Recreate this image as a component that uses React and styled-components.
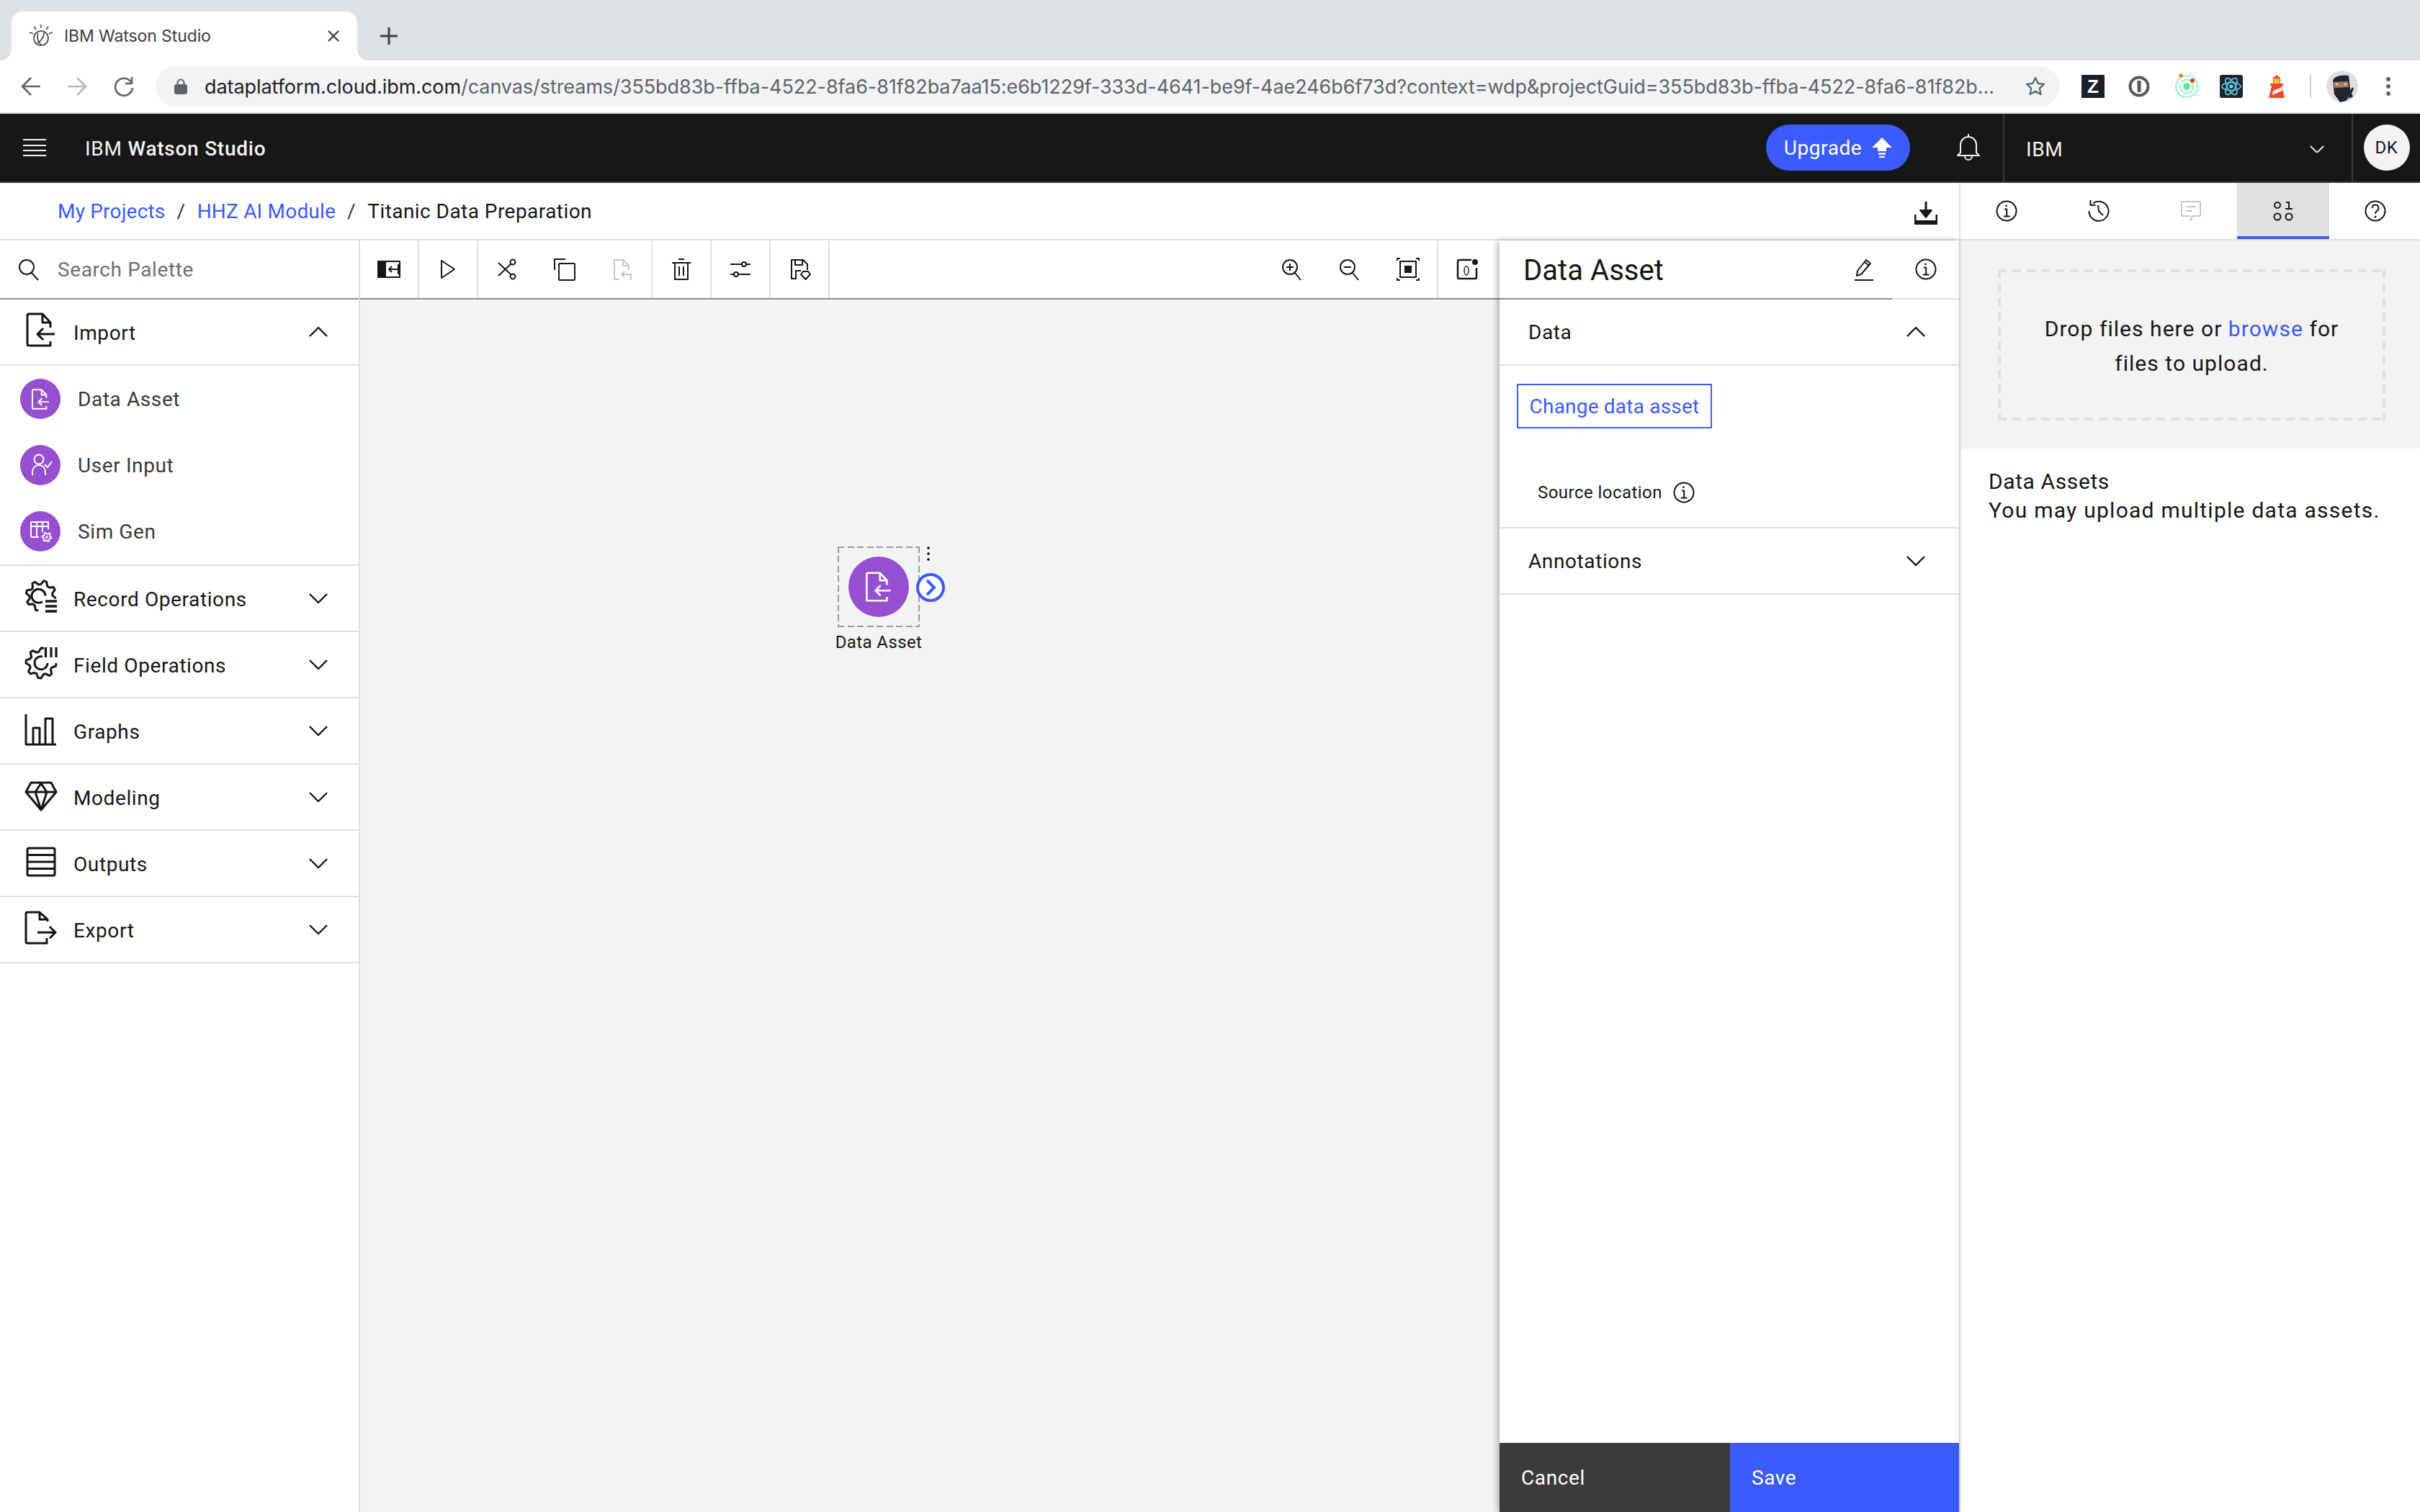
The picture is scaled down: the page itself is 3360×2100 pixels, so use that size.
import React from "react";
import styled, { createGlobalStyle, css } from "styled-components";

const BLUE = "#3a5bff";
const INK = "#161616";
const RULE = "#e0e0e0";
const PURPLE = "#964fd1";
const PLEX = `"Roboto", "Liberation Sans", sans-serif`;

const GlobalStyle = createGlobalStyle`
  html, body { margin: 0; padding: 0; background: #fff; }
  * { box-sizing: border-box; }
`;

// the browser's own dashed border is too short here, so the dashes are painted
const dashed = (color, w, on, off) => css`
  background-image:
    repeating-linear-gradient(90deg, ${color} 0 ${on}px, transparent ${on}px ${on + off}px),
    repeating-linear-gradient(90deg, ${color} 0 ${on}px, transparent ${on}px ${on + off}px),
    repeating-linear-gradient(180deg, ${color} 0 ${on}px, transparent ${on}px ${on + off}px),
    repeating-linear-gradient(180deg, ${color} 0 ${on}px, transparent ${on}px ${on + off}px);
  background-size: 100% ${w}px, 100% ${w}px, ${w}px 100%, ${w}px 100%;
  background-position: 0 0, 0 100%, 0 0, 100% 0;
  background-repeat: no-repeat;
`;

const Page = styled.div`
  width: 3360px;
  height: 2100px;
  display: flex;
  flex-direction: column;
  overflow: hidden;
  font-family: ${PLEX};
  font-size: 28px;
  letter-spacing: 0.6px;
  color: ${INK};
`;

/* browser chrome */
const TabStrip = styled.div`
  height: 84px;
  flex: none;
  display: flex;
  align-items: flex-end;
  padding-left: 16px;
  background: #dee1e6;
`;

const Tab = styled.div`
  position: relative;
  width: 480px;
  height: 68px;
  display: flex;
  align-items: center;
  padding: 0 24px;
  background: #fff;
  border-radius: 16px 16px 0 0;
  font-family: "Inter", "Liberation Sans", sans-serif;
  font-size: 23px;
  letter-spacing: -0.1px;
  color: #3c4043;

  &::before,
  &::after {
    content: "";
    position: absolute;
    bottom: 0;
    width: 16px;
    height: 16px;
  }
  &::before {
    left: -16px;
    background: radial-gradient(circle at 0 0, transparent 16px, #fff 16.5px);
  }
  &::after {
    right: -16px;
    background: radial-gradient(circle at 100% 0, transparent 16px, #fff 16.5px);
  }
`;

const TabTitle = styled.span`
  flex: 1;
  margin-left: 15px;
`;

const NewTab = styled.div`
  width: 88px;
  height: 68px;
  display: flex;
  align-items: center;
  justify-content: center;
  color: #3c4043;
`;

const AddressBar = styled.div`
  height: 74px;
  flex: none;
  display: flex;
  align-items: flex-start;
  padding-top: 8px;
  background: #fff;
  border-bottom: 2px solid #dee1e6;
`;

const NavButton = styled.div`
  width: ${(p) => p.$w}px;
  height: 56px;
  flex: none;
  display: flex;
  align-items: center;
  justify-content: center;
  color: ${(p) => (p.$off ? "#b4b6ba" : "#5f6368")};
`;

const Omnibox = styled.div`
  width: 2644px;
  height: 56px;
  flex: none;
  display: flex;
  align-items: center;
  padding: 0 20px 0 26px;
  border-radius: 28px;
  background: #f1f3f4;
  color: #5f6368;
`;

const Url = styled.div`
  flex: 1;
  margin: 0 20px 0 24px;
  white-space: nowrap;
  overflow: hidden;
  font-family: "Inter", "Liberation Sans", sans-serif;
  font-size: 27px;
  letter-spacing: -0.07px;

  b {
    font-weight: 400;
    color: #202124;
  }
`;

const Extensions = styled.div`
  flex: 1;
  height: 56px;
  display: flex;
  align-items: center;
  padding-left: 30px;
`;

const ExtSlot = styled.div`
  width: ${(p) => p.$w || 64}px;
  height: 44px;
  flex: none;
  display: flex;
  align-items: center;
  justify-content: ${(p) => p.$align || "flex-start"};
`;

const ZLogo = styled.span`
  width: 32px;
  height: 32px;
  display: flex;
  align-items: center;
  justify-content: center;
  background: #1b2028;
  color: #fff;
  font-family: "Liberation Sans", sans-serif;
  font-size: 26px;
  font-weight: 700;
  letter-spacing: 0;
`;

const ExtDivider = styled.span`
  width: 2px;
  height: 32px;
  background: #d0d1d3;
`;

/* product header */
const AppHeader = styled.header`
  height: 96px;
  flex: none;
  display: flex;
  align-items: center;
  background: #171717;
  border-bottom: 2px solid #393939;
  color: #f4f4f4;
`;

const Burger = styled.div`
  width: 118px;
  flex: none;
  padding-left: 32px;
  display: flex;
`;

const Brand = styled.div`
  flex: 1;
  padding-top: 2px;
  letter-spacing: 0.75px;

  b {
    font-weight: 500;
  }
`;

const Upgrade = styled.div`
  width: 200px;
  height: 64px;
  flex: none;
  display: flex;
  align-items: center;
  justify-content: center;
  gap: 14px;
  background: ${BLUE};
  border-radius: 32px;
  color: #fff;
`;

const BellSlot = styled.div`
  width: 129px;
  height: 94px;
  flex: none;
  display: flex;
  align-items: center;
  justify-content: center;
  padding-left: 32px;
`;

const Account = styled.div`
  width: 486px;
  height: 94px;
  flex: none;
  display: flex;
  align-items: center;
  justify-content: space-between;
  padding: 4px 38px 0 30px;
  border-left: 2px solid #393939;
  border-right: 2px solid #393939;
`;

const AvatarSlot = styled.div`
  width: 93px;
  flex: none;
  display: flex;
  justify-content: center;
`;

const Initials = styled.div`
  width: 64px;
  height: 64px;
  display: flex;
  align-items: center;
  justify-content: center;
  border-radius: 50%;
  background: #f3f3f3;
  color: ${INK};
  font-size: 24px;
`;

/* workspace */
const Workbench = styled.div`
  flex: 1;
  min-height: 0;
  display: flex;
`;

const Main = styled.div`
  width: 2720px;
  flex: none;
  display: flex;
  flex-direction: column;
`;

const Crumbs = styled.nav`
  height: 80px;
  flex: none;
  display: flex;
  align-items: center;
  padding: 0 30px 0 80px;
  border-bottom: 2px solid ${RULE};
`;

const Crumb = styled.span`
  color: ${BLUE};
  letter-spacing: 0.2px;
`;

const CrumbSep = styled.span`
  margin: 0 16px;
  color: #393939;
`;

const CrumbLast = styled.span`
  flex: 1;
  letter-spacing: 0.45px;
`;

const DownloadSlot = styled.div`
  margin-top: 5px;
`;

const Work = styled.div`
  flex: 1;
  min-height: 0;
  display: flex;
`;

const Sidebar = styled.aside`
  width: 500px;
  flex: none;
  border-right: 2px solid ${RULE};
  background: #fff;
`;

const SearchRow = styled.div`
  height: 82px;
  display: flex;
  align-items: center;
  gap: 24px;
  padding-left: 24px;
  border-bottom: 2px solid #8d8d8d;
  color: #6f6f6f;
`;

const PaletteRow = styled.div`
  height: 92px;
  display: flex;
  align-items: center;
  padding: 0 43px 0 30px;
  border-bottom: 2px solid ${RULE};
`;

const RowLabel = styled.span`
  flex: 1;
  margin-left: 24px;
  padding-top: 2px;
`;

const RowIcon = styled.svg`
  width: 48px;
  height: 48px;
  margin-top: -8px;
  flex: none;
  overflow: visible;
  fill: none;
  stroke: ${INK};
  stroke-width: 3;
  stroke-linejoin: round;
`;

const PaletteItems = styled.div`
  border-bottom: 2px solid ${RULE};
`;

const PaletteItem = styled.div`
  height: 92px;
  display: flex;
  align-items: center;
  gap: 24px;
  padding-left: 28px;
  color: #393939;
`;

const NodeDisc = styled.div`
  width: ${(p) => p.$size}px;
  height: ${(p) => p.$size}px;
  flex: none;
  display: flex;
  align-items: center;
  justify-content: center;
  border-radius: 50%;
  background: ${PURPLE};
  color: #fff;
`;

const Stage = styled.div`
  flex: 1;
  min-width: 0;
  display: flex;
  flex-direction: column;
`;

const Toolbar = styled.div`
  height: 82px;
  flex: none;
  display: flex;
  border-bottom: 2px solid #8d8d8d;
`;

const ToolGroup = styled.div`
  display: flex;
  border-right: ${(p) => (p.$open ? "none" : `2px solid ${RULE}`)};
  margin-left: ${(p) => (p.$push ? "auto" : "0")};
`;

const Tool = styled.div`
  width: ${(p) => p.$w || 80}px;
  height: 80px;
  display: flex;
  align-items: center;
  justify-content: center;
  padding-right: ${(p) => p.$inset || 0}px;
  color: ${(p) => (p.$off ? "#c6c6c6" : INK)};
`;

const Canvas = styled.div`
  position: relative;
  flex: 1;
  background: #f3f3f3;
`;

const NodeBox = styled.div`
  position: absolute;
  left: 663px;
  top: 343px;
  width: 114px;
  height: 112px;
  display: flex;
  align-items: center;
  justify-content: center;
  ${dashed("#9a9a9a", 2, 9, 4.5)}
`;

const NodeLabel = styled.div`
  position: absolute;
  left: 620px;
  top: 462px;
  width: 200px;
  text-align: center;
  font-size: 24px;
  letter-spacing: 0.4px;
`;

const NodeMenu = styled.svg`
  position: absolute;
  left: 785px;
  top: 342px;
`;

const NodePort = styled.svg`
  position: absolute;
  left: 771px;
  top: 379px;
`;

const Props = styled.section`
  position: relative;
  width: 638px;
  flex: none;
  display: flex;
  flex-direction: column;
  background: #fff;
  box-shadow: -3px 0 8px rgba(0, 0, 0, 0.28), inset -12px 0 10px -10px rgba(0, 0, 0, 0.06);
`;

const PropsHead = styled.div`
  height: 82px;
  flex: none;
  display: flex;
`;

const TitleField = styled.div`
  width: 545px;
  display: flex;
  align-items: center;
  justify-content: space-between;
  padding: 2px 23px 0 33px;
  border-bottom: 2px solid #8d8d8d;
  font-size: 40px;
  letter-spacing: 0.05px;
`;

const HeadInfo = styled.div`
  flex: 1;
  display: flex;
  align-items: center;
  justify-content: center;
  border-bottom: 2px solid ${RULE};
`;

const SectionHead = styled.div`
  height: 92px;
  flex: none;
  display: flex;
  align-items: center;
  justify-content: space-between;
  padding: 0 47px 0 40px;
  border-bottom: 2px solid ${RULE};
`;

const SectionBody = styled.div`
  height: 226px;
  flex: none;
  padding: 25px 0 0 24px;
  border-bottom: 2px solid ${RULE};
`;

const OutlineButton = styled.div`
  width: 271px;
  height: 62px;
  display: flex;
  align-items: center;
  justify-content: center;
  border: 2px solid ${BLUE};
  color: ${BLUE};
  letter-spacing: 0.2px;
`;

const SourceRow = styled.div`
  height: 44px;
  margin: 67px 0 0 29px;
  display: flex;
  align-items: center;
  gap: 14px;
  font-size: 24px;
  letter-spacing: 0.45px;
`;

const Spacer = styled.div`
  flex: 1;
`;

const Footer = styled.div`
  height: 96px;
  flex: none;
  display: flex;
`;

const FooterButton = styled.div`
  width: ${(p) => p.$w}px;
  display: flex;
  align-items: center;
  padding-left: 30px;
  background: ${(p) => (p.$primary ? BLUE : "#3b3b3b")};
  color: #fff;
`;

/* assets side panel */
const Side = styled.aside`
  flex: 1;
  display: flex;
  flex-direction: column;
  border-left: 2px solid ${RULE};
  background: #fff;
`;

const SideTabs = styled.div`
  height: 80px;
  flex: none;
  display: flex;
  border-bottom: 2px solid ${RULE};
`;

const SideTab = styled.div`
  width: 128px;
  height: 78px;
  flex: none;
  display: flex;
  align-items: center;
  justify-content: center;
  padding-top: 4px;
  background: ${(p) => (p.$active ? RULE : "transparent")};
  border-bottom: 4px solid ${(p) => (p.$active ? BLUE : "transparent")};
  color: ${(p) => (p.$off ? "#c6c6c6" : INK)};
`;

const DropArea = styled.div`
  height: 289px;
  flex: none;
  padding: 40px 50px 39px 52px;
  background: #f3f3f3;
`;

const DropBox = styled.div`
  height: 210px;
  display: flex;
  align-items: center;
  justify-content: center;
  padding-top: 4px;
  ${dashed(RULE, 4, 12, 8)}
  text-align: center;
  line-height: 48px;
  font-size: 30px;
  letter-spacing: 1.05px;
`;

const BrowseLink = styled.span`
  color: ${BLUE};
`;

const SideNote = styled.div`
  padding: 26px 0 0 39px;
  font-size: 30px;
  line-height: 40px;
`;

const NoteBody = styled.div`
  letter-spacing: 1.25px;
`;

/* drawings */
const Icon = styled.svg.attrs((p) => ({
  width: p.$size || 32,
  height: p.$h || p.$size || 32,
  viewBox: p.$box || "0 0 32 32",
}))`
  flex: none;
  display: block;
  fill: none;
  stroke: currentColor;
  stroke-width: ${(p) => p.$stroke || 2};
  stroke-linejoin: round;
  ${(p) => (p.$color ? `color: ${p.$color};` : "")}
`;

const gearPath = (cx, cy, R, r, teeth, from, to) => {
  const step = 360 / teeth / 4;
  const count = Math.round((to - from) / step);
  let d = "";
  for (let k = 0; k <= count; k += 1) {
    const a = ((from + k * step) * Math.PI) / 180;
    const rad = k % 4 < 2 ? R : r;
    d += `${k ? "L" : "M"}${(cx + rad * Math.cos(a)).toFixed(2)} ${(cy + rad * Math.sin(a)).toFixed(2)}`;
  }
  return d;
};

const DOC_IMPORT = "M40 22v-7L29 3H10a2 2 0 0 0-2 2v40a2 2 0 0 0 2 2h30v-6M29 3v12h11M46 31H22M30 23l-8 8 8 8";
const DOC_BOX = "3 1 48 48";

const ChevronDown = ({ size = 26, color = INK }) => (
  <Icon $size={size} $box="0 0 26 14" $h={size * 0.54} $color={color} $stroke={2.4}>
    <path d="M1 1l12 12L25 1" />
  </Icon>
);

const ChevronUp = ({ size = 26 }) => (
  <Icon $size={size} $box="0 0 26 14" $h={size * 0.54} $stroke={2.4}>
    <path d="M1 13L13 1l12 12" />
  </Icon>
);

const InfoIcon = () => (
  <Icon>
    <circle cx="16" cy="16" r="13.5" />
    <circle cx="15.5" cy="8.8" r="1.4" fill="currentColor" stroke="none" />
    <path d="M13 13.5h3.2v10M12 23.5h8.5" />
  </Icon>
);

const PencilIcon = () => (
  <Icon>
    <path d="M6 24l1-7L19 2l6 5-13 15zM17 5l6 5M3 30h26" />
  </Icon>
);

const PALETTE_ICONS = {
  record: (
    <RowIcon viewBox="0 0 48 48">
      <path d={gearPath(27, 24.5, 21, 16, 8, 100, 370)} />
      <path d="M33 24.5a9.5 9.5 0 1 0-4 8" />
      <path d="M33 32h16M33 39h16M33 46h16" strokeWidth="3.4" />
    </RowIcon>
  ),
  field: (
    <RowIcon viewBox="0 0 48 48">
      <path d={gearPath(27, 26, 21, 16, 8, 0, 285)} />
      <path d="M36 26a9 9 0 1 1-7-9" />
      <path d="M33.5 4v14M41 4v14M48 4v14" strokeWidth="3.2" />
    </RowIcon>
  ),
  graphs: (
    <RowIcon viewBox="0 0 48 48">
      <path d="M6 5v41a1 1 0 0 0 1 1h41M16 47V24h9v23M33 47V11h10v36" />
    </RowIcon>
  ),
  modeling: (
    <RowIcon viewBox="0 0 48 48">
      <path d="M13 8h28l7 13-21 25L6 21zM6 21h42M19 21l8-12 8 12M19 21l8 25 8-25" />
    </RowIcon>
  ),
  outputs: (
    <RowIcon viewBox="0 0 48 48">
      <rect x="8" y="7" width="38" height="38" rx="2" />
      <path d="M8 16.5h38M8 26h38M8 35.5h38" />
    </RowIcon>
  ),
  export: (
    <RowIcon viewBox="0 0 48 48">
      <path d="M36 17v-3L25 4H8a2 2 0 0 0-2 2v39a2 2 0 0 0 2 2h27v-7M25 4v10h11M22 32h25M39 24l8 8-8 8" />
    </RowIcon>
  ),
};

const PALETTE = [
  ["Record Operations", "record"],
  ["Field Operations", "field"],
  ["Graphs", "graphs"],
  ["Modeling", "modeling"],
  ["Outputs", "outputs"],
  ["Export", "export"],
];

const Favicon = () => (
  <Icon $size={34} $box="0 0 34 34" $stroke={1.6} $color="#3c4043">
    <circle cx="17" cy="20" r="10" />
    <path d="M12 27c6-4 9-9 9-15M13 13c-2 5-1 12 4 16" />
    <path d="M17 1v5M7 4l3 4M27 4l-3 4M1 12l5 2M33 12l-5 2" />
  </Icon>
);

const OnePassword = () => (
  <Icon $box="0 0 32 32" $stroke={4} $color="#55575a">
    <circle cx="16" cy="16" r="12.5" />
    <path d="M16 8v16" strokeWidth="5" />
  </Icon>
);

const Orbit = () => (
  <svg width="36" height="36" viewBox="0 0 36 36" fill="none">
    <circle cx="18" cy="18" r="15" stroke="#7df5b5" strokeWidth="1.6" />
    <circle cx="18" cy="18" r="9.5" stroke="#7df5b5" strokeWidth="1.6" />
    <circle cx="18" cy="18" r="5" fill="#69e79a" />
    <circle cx="10" cy="3" r="3" fill="#ee8a3c" />
    <circle cx="26" cy="10" r="3" fill="#e4462f" />
  </svg>
);

const ReactLogo = () => (
  <svg width="32" height="32" viewBox="0 0 32 32" fill="none">
    <rect width="32" height="32" rx="3" fill="#20232a" />
    <g stroke="#61dafb" strokeWidth="1.5">
      <ellipse cx="16" cy="16" rx="13" ry="5.5" />
      <ellipse cx="16" cy="16" rx="13" ry="5.5" transform="rotate(60 16 16)" />
      <ellipse cx="16" cy="16" rx="13" ry="5.5" transform="rotate(120 16 16)" />
    </g>
    <circle cx="16" cy="16" r="2.6" fill="#61dafb" />
  </svg>
);

const Lighthouse = () => (
  <svg width="22" height="32" viewBox="0 0 22 32">
    <path d="M11 0l5 4v8h4v3h-2l4 17H0l4-17H2v-3h4V4z" fill="#ec4a2c" />
    <rect x="7" y="5" width="8" height="7" fill="#f5c84a" />
    <path d="M6 22l12-5 1 5-14 6z" fill="#fff" opacity="0.9" />
  </svg>
);

const Ninja = () => (
  <svg width="44" height="44" viewBox="0 0 44 44">
    <circle cx="22" cy="22" r="22" fill="#dfdfdf" />
    <path d="M9 14c1-6 12-9 22-7l2 18c1 8-3 15-6 17l-8 2-5-7-3-4z" fill="#20262e" />
    <path d="M9 16l21-1 1 8-20 1z" fill="#a87d5a" />
    <path d="M13 18l5 1-5 1zM25 18l5 1-5 1z" fill="#fff" />
    <path d="M33 28l3-5 2 2-3 7 2 4-6 3z" fill="#20262e" />
  </svg>
);

const App = () => (
  <Page>
    <GlobalStyle />

    <TabStrip>
      <Tab>
        <Favicon />
        <TabTitle>IBM Watson Studio</TabTitle>
        <Icon $size={18} $box="0 0 18 18" $stroke={2.4}>
          <path d="M2 2l14 14M16 2L2 16" />
        </Icon>
      </Tab>
      <NewTab>
        <Icon $size={26} $box="0 0 26 26" $stroke={3}>
          <path d="M13 1v24M1 13h24" />
        </Icon>
      </NewTab>
    </TabStrip>

    <AddressBar>
      <NavButton $w={86}>
        <Icon $size={28} $box="0 0 28 28" $stroke={2.6}>
          <path d="M27 14H3M14 2L2 14l12 12" />
        </Icon>
      </NavButton>
      <NavButton $w={42} $off>
        <Icon $size={28} $box="0 0 28 28" $stroke={2.6}>
          <path d="M1 14h24M14 2l12 12-12 12" />
        </Icon>
      </NavButton>
      <NavButton $w={88}>
        <Icon $size={28} $box="0 0 28 28" $stroke={2.6}>
          <path d="M24 8a12 12 0 1 0 2 8M25 1v9h-9" />
        </Icon>
      </NavButton>
      <Omnibox>
        <Icon $size={18} $h={22} $box="0 0 18 22" $color="#5f6368">
          <rect x="1" y="9" width="16" height="12" rx="2" fill="currentColor" />
          <path d="M4.5 9V6a4.5 4.5 0 0 1 9 0v3" />
        </Icon>
        <Url>
          <b>dataplatform.cloud.ibm.com</b>
          /canvas/streams/355bd83b-ffba-4522-8fa6-81f82ba7aa15:e6b1229f-333d-4641-be9f-4ae246b6f73d?context=wdp&amp;projectGuid=355bd83b-ffba-4522-8fa6-81f82b...
        </Url>
        <Icon $size={28} $box="0 0 28 28" $stroke={2.2} $color="#5f6368">
          <path d="M14 2l3.6 7.8 8.4 1-6.2 5.8 1.7 8.4L14 20.8 6.5 25l1.7-8.4L2 10.8l8.4-1z" />
        </Icon>
      </Omnibox>
      <Extensions>
        <ExtSlot $w={64}>
          <ZLogo>Z</ZLogo>
        </ExtSlot>
        <ExtSlot $w={64}>
          <OnePassword />
        </ExtSlot>
        <ExtSlot $w={64}>
          <Orbit />
        </ExtSlot>
        <ExtSlot $w={68}>
          <ReactLogo />
        </ExtSlot>
        <ExtSlot $w={57}>
          <Lighthouse />
        </ExtSlot>
        <ExtSlot $w={23}>
          <ExtDivider />
        </ExtSlot>
        <ExtSlot $w={66}>
          <Ninja />
        </ExtSlot>
        <ExtSlot $w={24} $align="flex-end">
          <Icon $size={8} $h={28} $box="0 0 8 28" $color="#5f6368">
            <g fill="currentColor" stroke="none">
              <circle cx="4" cy="4" r="3" />
              <circle cx="4" cy="14" r="3" />
              <circle cx="4" cy="24" r="3" />
            </g>
          </Icon>
        </ExtSlot>
      </Extensions>
    </AddressBar>

    <AppHeader>
      <Burger>
        <Icon $size={32} $h={24} $box="0 0 32 24" $stroke={2}>
          <path d="M0 1h32M0 9h32M0 16h32M0 23h32" />
        </Icon>
      </Burger>
      <Brand>
        IBM <b>Watson Studio</b>
      </Brand>
      <Upgrade>
        Upgrade
        <Icon $size={28} $box="0 0 28 28" $color="#fff">
          <path d="M14 0L28 14H20v5H8v-5H0z" fill="currentColor" stroke="none" />
          <path d="M9 22.5h10M10 27h8" strokeWidth="2.5" />
        </Icon>
      </Upgrade>
      <BellSlot>
        <Icon $size={40} $box="0 0 40 40">
          <path d="M20 1v4M9 27V16a11 11 0 0 1 22 0v11l4 4H5zM15 32a5 5 0 0 0 10 0" />
        </Icon>
      </BellSlot>
      <Account>
        IBM
        <ChevronDown size={20} color="#f4f4f4" />
      </Account>
      <AvatarSlot>
        <Initials>DK</Initials>
      </AvatarSlot>
    </AppHeader>

    <Workbench>
      <Main>
        <Crumbs>
          <Crumb>My Projects</Crumb>
          <CrumbSep>/</CrumbSep>
          <Crumb>HHZ AI Module</Crumb>
          <CrumbSep>/</CrumbSep>
          <CrumbLast>Titanic Data Preparation</CrumbLast>
          <DownloadSlot>
            <Icon $size={32} $box="0 0 32 32" $stroke={3}>
              <path d="M16 0v20" />
              <path d="M8 12l8 10 8-10z" fill="currentColor" strokeWidth="2" />
              <path d="M1 18v13h30V18" />
              <path d="M1 26h30v6H1z" fill="currentColor" stroke="none" />
            </Icon>
          </DownloadSlot>
        </Crumbs>

        <Work>
          <Sidebar>
            <SearchRow>
              <Icon $size={32} $color={INK}>
                <circle cx="13" cy="13" r="10" />
                <path d="M20 21l9 10" />
              </Icon>
              Search Palette
            </SearchRow>

            <PaletteRow>
              <RowIcon viewBox="0 0 48 48">
                <path d={DOC_IMPORT} />
              </RowIcon>
              <RowLabel>Import</RowLabel>
              <ChevronUp />
            </PaletteRow>
            <PaletteItems>
              <PaletteItem>
                <NodeDisc $size={56}>
                  <Icon $size={29} $box={DOC_BOX} $stroke={3.2}>
                    <path d={DOC_IMPORT} />
                  </Icon>
                </NodeDisc>
                Data Asset
              </PaletteItem>
              <PaletteItem>
                <NodeDisc $size={56}>
                  <Icon $size={36} $box="0 0 36 36">
                    <circle cx="16" cy="10" r="6.5" />
                    <path d="M7 32v-5a9 9 0 0 1 18 0v5M24 17l4 4 6-8" />
                  </Icon>
                </NodeDisc>
                User Input
              </PaletteItem>
              <PaletteItem>
                <NodeDisc $size={56}>
                  <Icon $size={36} $box="0 0 36 36">
                    <path d="M5 26V5h24v10M5 11h24M13 5v21M21 5v14M5 26h11" />
                    <path d={gearPath(27, 26, 6.5, 4.5, 6, 0, 360)} strokeWidth="1.8" />
                    <circle cx="27" cy="26" r="1.5" strokeWidth="1.2" />
                  </Icon>
                </NodeDisc>
                Sim Gen
              </PaletteItem>
            </PaletteItems>

            {PALETTE.map(([label, key]) => (
              <PaletteRow key={key}>
                {PALETTE_ICONS[key]}
                <RowLabel>{label}</RowLabel>
                <ChevronDown />
              </PaletteRow>
            ))}
          </Sidebar>

          <Stage>
            <Toolbar>
              <ToolGroup>
                <Tool>
                  <Icon $size={32} $h={24} $box="0 0 32 24">
                    <rect x="1" y="1" width="30" height="22" />
                    <rect x="0" y="0" width="12" height="24" fill="currentColor" stroke="none" />
                    <path d="M29 5v14M16 12h12M20 8l-4 4 4 4" />
                  </Icon>
                </Tool>
              </ToolGroup>
              <ToolGroup>
                <Tool>
                  <Icon $size={24} $h={28} $box="0 0 24 28">
                    <path d="M3 2l18 12L3 26z" />
                  </Icon>
                </Tool>
              </ToolGroup>
              <ToolGroup>
                <Tool>
                  <Icon>
                    <circle cx="24" cy="6" r="3.5" />
                    <circle cx="24" cy="26" r="3.5" />
                    <path d="M4 25L21.5 8.5M4 7l17.5 16.5" />
                  </Icon>
                </Tool>
                <Tool>
                  <Icon>
                    <path d="M2 17V2h15" />
                    <rect x="8" y="8" width="22" height="23" rx="1" />
                  </Icon>
                </Tool>
                <Tool $off>
                  <Icon>
                    <path d="M12 30H6a1 1 0 0 1-1-1V3h12l8 8v6M17 3v8h8M28 31v-8H15M19 19l-4 4 4 4" />
                  </Icon>
                </Tool>
              </ToolGroup>
              <ToolGroup>
                <Tool>
                  <Icon>
                    <path d="M3 7h26M12 2h8M7 7v23h18V7M13 12v13M19 12v13" />
                  </Icon>
                </Tool>
              </ToolGroup>
              <ToolGroup>
                <Tool>
                  <Icon>
                    <circle cx="21" cy="9" r="3" />
                    <circle cx="10" cy="23" r="3" />
                    <path d="M2 9h16M24 9h6M2 23h5M13 23h17" />
                  </Icon>
                </Tool>
              </ToolGroup>
              <ToolGroup>
                <Tool>
                  <Icon>
                    <path d="M12 29H5V3h16l6 6v8M10 3v7h10V3M11 29V18h7" />
                    <path d="M18 23l3-4h7l3 4-6.500 7z" />
                  </Icon>
                </Tool>
              </ToolGroup>

              <ToolGroup $push>
                <Tool>
                  <Icon>
                    <circle cx="13" cy="13" r="10" />
                    <path d="M20 21l8 10M13 8v10M8 13h10" />
                  </Icon>
                </Tool>
                <Tool>
                  <Icon>
                    <circle cx="13" cy="13" r="10" />
                    <path d="M20 21l8 10M8 13h10" />
                  </Icon>
                </Tool>
                <Tool $w={81}>
                  <Icon>
                    <rect x="5" y="5" width="22" height="22" />
                    <rect x="11" y="11" width="10" height="10" fill="currentColor" stroke="none" />
                    <path d="M1 4V1h4M27 1h4v3M31 28v3h-4M5 31H1v-3" />
                  </Icon>
                </Tool>
              </ToolGroup>
              <ToolGroup $open>
                <Tool $w={85} $inset={6}>
                  <Icon>
                    <path d="M22 3H5a2 2 0 0 0-2 2v22a2 2 0 0 0 2 2h22a2 2 0 0 0 2-2V14" strokeWidth="2.5" />
                    <circle cx="27" cy="6" r="4" fill="currentColor" stroke="none" />
                    <ellipse cx="15" cy="18" rx="3" ry="6" strokeWidth="1.5" />
                  </Icon>
                </Tool>
              </ToolGroup>
            </Toolbar>

            <Canvas>
              <NodeBox>
                <NodeDisc $size={84}>
                  <Icon $size={42} $box={DOC_BOX} $stroke={3}>
                    <path d={DOC_IMPORT} />
                  </Icon>
                </NodeDisc>
              </NodeBox>
              <NodeMenu width="8" height="22" viewBox="0 0 8 22">
                <circle cx="4" cy="3" r="1.8" />
                <circle cx="4" cy="11" r="1.8" />
                <circle cx="4" cy="19" r="1.8" />
              </NodeMenu>
              <NodePort width="42" height="42" viewBox="0 0 42 42" fill="none">
                <circle cx="21" cy="21" r="18" fill="#fff" stroke={BLUE} strokeWidth="4" />
                <path d="M16 11l10 10-10 10" stroke={BLUE} strokeWidth="4" />
              </NodePort>
              <NodeLabel>Data Asset</NodeLabel>
            </Canvas>
          </Stage>

          <Props>
            <PropsHead>
              <TitleField>
                Data Asset
                <PencilIcon />
              </TitleField>
              <HeadInfo>
                <InfoIcon />
              </HeadInfo>
            </PropsHead>
            <SectionHead>
              Data
              <ChevronUp />
            </SectionHead>
            <SectionBody>
              <OutlineButton>Change data asset</OutlineButton>
              <SourceRow>
                Source location
                <InfoIcon />
              </SourceRow>
            </SectionBody>
            <SectionHead>
              Annotations
              <ChevronDown />
            </SectionHead>
            <Spacer />
            <Footer>
              <FooterButton $w={320}>Cancel</FooterButton>
              <FooterButton $w={318} $primary>
                Save
              </FooterButton>
            </Footer>
          </Props>
        </Work>
      </Main>

      <Side>
        <SideTabs>
          <SideTab>
            <InfoIcon />
          </SideTab>
          <SideTab>
            <Icon>
              <path d="M8 5.5A13.5 13.5 0 1 1 2.5 16M4.5 1v7h7M15 8l1 8 6 6" />
            </Icon>
          </SideTab>
          <SideTab $off>
            <Icon>
              <path d="M4 3h24a1 1 0 0 1 1 1v18a1 1 0 0 1-1 1H18l-3 7M15 23H4a1 1 0 0 1-1-1V4a1 1 0 0 1 1-1M9 10h14M9 16h8" />
            </Icon>
          </SideTab>
          <SideTab $active>
            <Icon>
              <circle cx="8" cy="8" r="4" />
              <circle cx="8" cy="24" r="4.5" />
              <circle cx="24" cy="24" r="4.5" />
              <path d="M20 4h4v9M19 13h10" />
            </Icon>
          </SideTab>
          <SideTab>
            <Icon>
              <circle cx="16" cy="16" r="13.5" />
              <path d="M11.5 12a4.5 4.5 0 1 1 7 3.7c-1.8 1.2-2.5 2-2.5 4.3" />
              <circle cx="16" cy="24" r="1.5" fill="currentColor" stroke="none" />
            </Icon>
          </SideTab>
        </SideTabs>
        <DropArea>
          <DropBox>
            <div>
              Drop files here or <BrowseLink>browse</BrowseLink> for
              <br />
              files to upload.
            </div>
          </DropBox>
        </DropArea>
        <SideNote>
          Data Assets
          <NoteBody>You may upload multiple data assets.</NoteBody>
        </SideNote>
      </Side>
    </Workbench>
  </Page>
);

export default App;
